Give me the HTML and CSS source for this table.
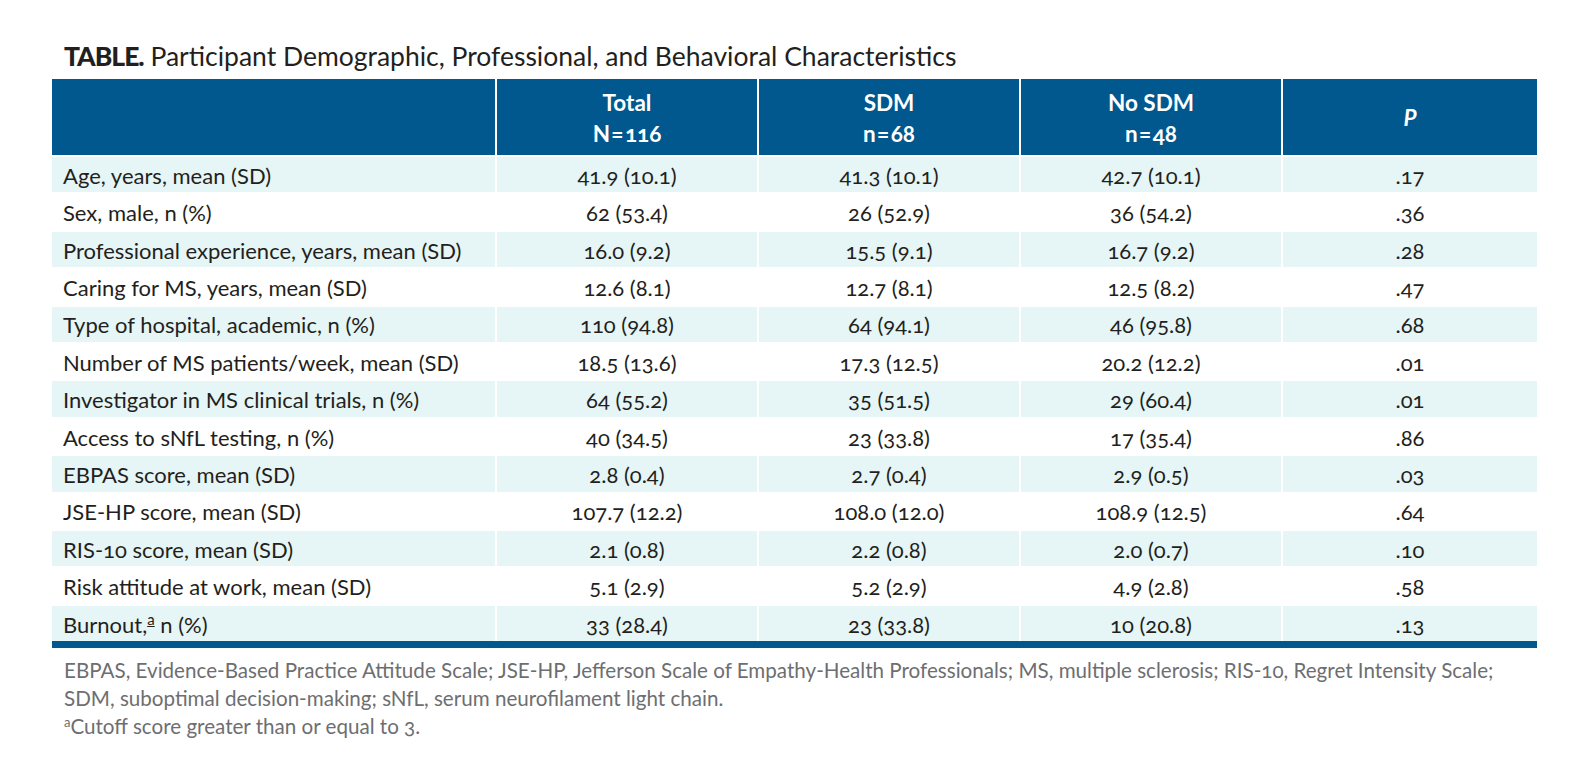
FILE: index.html
```html
<!DOCTYPE html>
<html lang="en">
<head>
<meta charset="utf-8">
<title>Table</title>
<link rel="stylesheet" href="styles.css">
</head>
<body>
<div class="page">
  <h1 class="title"><span class="label">TABLE.</span> Participant Demographic, Professional, and Behavioral Characteristics</h1>
  <table class="data">
    <colgroup>
      <col class="c-label">
      <col class="c-num">
      <col class="c-num">
      <col class="c-num">
      <col class="c-p">
    </colgroup>
    <thead>
      <tr>
        <th></th>
        <th>Total<br>N&#8202;=&#8202;116</th>
        <th>SDM<br>n&#8202;=&#8202;68</th>
        <th>No SDM<br>n&#8202;=&#8202;48</th>
        <th><i>P</i></th>
      </tr>
    </thead>
    <tbody>
      <tr class="tint"><td>Age, years, mean (SD)</td><td>41.9 (10.1)</td><td>41.3 (10.1)</td><td>42.7 (10.1)</td><td>.17</td></tr>
      <tr><td>Sex, male, n (%)</td><td>62 (53.4)</td><td>26 (52.9)</td><td>36 (54.2)</td><td>.36</td></tr>
      <tr class="tint"><td>Professional experience, years, mean (SD)</td><td>16.0 (9.2)</td><td>15.5 (9.1)</td><td>16.7 (9.2)</td><td>.28</td></tr>
      <tr><td>Caring for MS, years, mean (SD)</td><td>12.6 (8.1)</td><td>12.7 (8.1)</td><td>12.5 (8.2)</td><td>.47</td></tr>
      <tr class="tint"><td>Type of hospital, academic, n (%)</td><td>110 (94.8)</td><td>64 (94.1)</td><td>46 (95.8)</td><td>.68</td></tr>
      <tr><td>Number of MS patients/week, mean (SD)</td><td>18.5 (13.6)</td><td>17.3 (12.5)</td><td>20.2 (12.2)</td><td>.01</td></tr>
      <tr class="tint"><td>Investigator in MS clinical trials, n (%)</td><td>64 (55.2)</td><td>35 (51.5)</td><td>29 (60.4)</td><td>.01</td></tr>
      <tr><td>Access to sNfL testing, n (%)</td><td>40 (34.5)</td><td>23 (33.8)</td><td>17 (35.4)</td><td>.86</td></tr>
      <tr class="tint"><td>EBPAS score, mean (SD)</td><td>2.8 (0.4)</td><td>2.7 (0.4)</td><td>2.9 (0.5)</td><td>.03</td></tr>
      <tr><td>JSE-HP score, mean (SD)</td><td>107.7 (12.2)</td><td>108.0 (12.0)</td><td>108.9 (12.5)</td><td>.64</td></tr>
      <tr class="tint"><td>RIS-10 score, mean (SD)</td><td>2.1 (0.8)</td><td>2.2 (0.8)</td><td>2.0 (0.7)</td><td>.10</td></tr>
      <tr><td>Risk attitude at work, mean (SD)</td><td>5.1 (2.9)</td><td>5.2 (2.9)</td><td>4.9 (2.8)</td><td>.58</td></tr>
      <tr class="tint"><td>Burnout,<sup class="fn-mark">a</sup> n (%)</td><td>33 (28.4)</td><td>23 (33.8)</td><td>10 (20.8)</td><td>.13</td></tr>
    </tbody>
  </table>
  <div class="notes">
    <p>EBPAS, Evidence-Based Practice Attitude Scale; JSE-HP, Jefferson Scale of Empathy-Health Professionals; MS, multiple sclerosis; RIS-10, Regret Intensity Scale;<br>SDM, suboptimal decision-making; sNfL, serum neurofilament light chain.</p>
    <p><sup>a</sup>Cutoff score greater than or equal to 3.</p>
  </div>
</div>
</body>
</html>
```

FILE: styles.css
```css
html, body {
  margin: 0;
  padding: 0;
  background: #ffffff;
}

body {
  font-family: Lato, "Liberation Sans", sans-serif;
  color: #231f20;
  font-variant-numeric: oldstyle-nums;
}

.page {
  width: 1485px;
  padding: 40px 0 0 52px;
}

.title {
  margin: 0 0 7px 12px;
  font-size: 26.5px;
  line-height: 32px;
  font-weight: 400;
  color: #231f20;
}

.title .label {
  font-weight: 900;
  letter-spacing: -1px;
}

.data {
  width: 1485px;
  table-layout: fixed;
  border-collapse: separate;
  border-spacing: 0;
  border-bottom: 7px solid #00588f;
}

.c-label { width: 443px; }
.c-num { width: 262px; }
.c-p { width: 256px; }

.data thead tr {
  height: 76px;
}

.data th {
  background: #00588f;
  color: #ffffff;
  font-size: 22.5px;
  line-height: 31px;
  font-weight: 700;
  text-align: center;
  padding: 1px 0 0 0;
  vertical-align: middle;
}

.data th + th,
.data td + td {
  border-left: 2px solid #ffffff;
}

.data th i {
  font-style: italic;
}

.data tbody tr {
  height: 37.42px;
}

.data td {
  border-top: 2px solid #ffffff;
  padding: 2px 0 0 0;
  font-size: 22px;
  line-height: 24px;
  text-align: center;
  vertical-align: middle;
}

.data td:first-child {
  text-align: left;
  padding-left: 11px;
}

.data tr.tint td {
  background: #e6f5f5;
}

.fn-mark {
  font-size: 15px;
  line-height: 0;
  text-decoration: underline;
  vertical-align: 8px;
}

.notes {
  padding: 8px 0 0 12px;
  color: #6d6e71;
  font-size: 20.6px;
  line-height: 28px;
}

.notes p {
  margin: 0;
}

.notes sup {
  font-size: 13px;
  line-height: 0;
  vertical-align: 7px;
}
```
